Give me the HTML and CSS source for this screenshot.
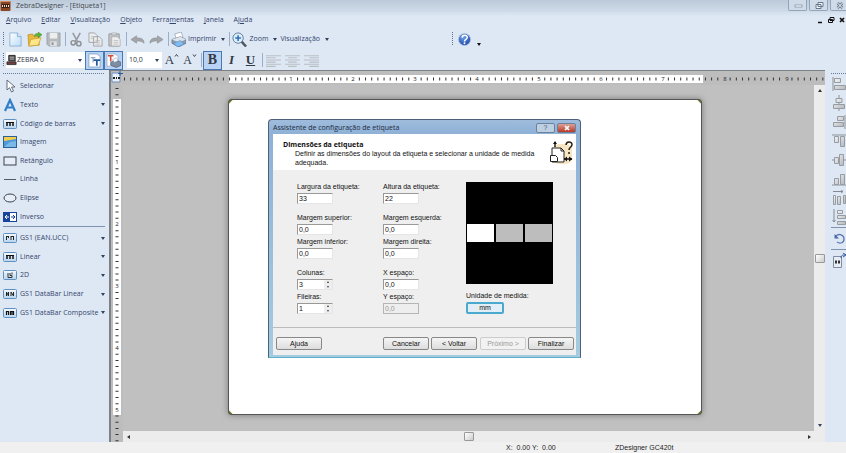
FILE: index.html
```html
<!DOCTYPE html>
<html lang="pt">
<head>
<meta charset="utf-8">
<title>ZebraDesigner - [Etiqueta1]</title>
<link rel="stylesheet" href="styles.css">
</head>
<body>
<svg class="defs" aria-hidden="true">
  <defs>
    <linearGradient id="steel" x1="0" y1="0" x2="1" y2="1"><stop offset="0" stop-color="#f4f4f4"/><stop offset="1" stop-color="#b4b8bc"/></linearGradient>
    <linearGradient id="paper" x1="0" y1="0" x2="1" y2="1"><stop offset="0" stop-color="#fff"/><stop offset="1" stop-color="#b9dcf7"/></linearGradient>
    <radialGradient id="ball" cx=".4" cy=".3" r=".8"><stop offset="0" stop-color="#6fa0ec"/><stop offset="1" stop-color="#163f9e"/></radialGradient>
    <linearGradient id="frame" x1="0" y1="0" x2="0" y2="1"><stop offset="0" stop-color="#f6fafd"/><stop offset="1" stop-color="#b5d3ee"/></linearGradient>
  </defs>
</svg>

<header class="titlebar">
  <svg class="app-icon" viewBox="0 0 10 10"><rect width="10" height="10" rx="1" fill="#8a4524"/><rect x="1" y="3" width="8" height="4" fill="#3b1f14"/><path d="M2 4v2M4 4v2M6 4v2M8 4v2" stroke="#f3d9c2"/><path d="M0 .5h10" stroke="#d78b5c"/></svg>
  <h1>ZebraDesigner - [Etiqueta1]</h1>
  <div class="window-controls">
    <button aria-label="Minimizar"><svg viewBox="0 0 16 9"><rect x="5" y="4" width="7" height="2" fill="#fff" stroke="#76869a" stroke-width=".7"/></svg></button>
    <button aria-label="Restaurar"><svg viewBox="0 0 16 9"><path d="M7 1.500h5v4h-5zM5 3.500h5v4h-5z" fill="#f4f8fc" stroke="#66778c" stroke-width="1"/></svg></button>
    <button aria-label="Fechar"><svg viewBox="0 0 16 9"><path d="M5.500 2l5 5m0-5l-5 5" stroke="#66778c" stroke-width="2.600"/><path d="M5.500 2l5 5m0-5l-5 5" stroke="#fff" stroke-width="1"/></svg></button>
  </div>
</header>

<nav class="menubar">
  <a href="#"><u>A</u>rquivo</a><a href="#"><u>E</u>ditar</a><a href="#"><u>V</u>isualização</a><a href="#"><u>O</u>bjeto</a><a href="#">Ferra<u>m</u>entas</a><a href="#"><u>J</u>anela</a><a href="#">Aj<u>u</u>da</a>
  <div class="child-controls">
    <button aria-label="Minimizar janela"><svg viewBox="0 0 8 8"><path d="M2 6.500h4" stroke="#111" stroke-width="1.500"/></svg></button>
    <button aria-label="Restaurar janela"><svg viewBox="0 0 8 8"><path d="M3 1.500h4v3H3zM1.500 3.500h4v3h-4z" fill="#dee8f5" stroke="#111"/></svg></button>
    <button aria-label="Fechar janela"><svg viewBox="0 0 8 8"><path d="M2 2l4 4m0-4L2 6" stroke="#111" stroke-width="1.700"/></svg></button>
  </div>
</nav>

<div class="toolbar">
  <span class="grip"></span>
  <button class="tool" aria-label="Novo"><svg viewBox="0 0 16 16"><path d="M2 1h8l4 4v10H2z" fill="url(#paper)" stroke="#7da7cf" stroke-width=".8"/><path d="M10 1v4h4" fill="#cfe6fa" stroke="#7da7cf" stroke-width=".8"/></svg></button>
  <button class="tool" aria-label="Abrir"><svg viewBox="0 0 16 16"><path d="M1 3l5-1 1 2 6 1v9l-11 1z" fill="#e7b93c" stroke="#b98718" stroke-width=".7"/><path d="M4 8l11-2-3 8-10 1z" fill="#fde58a" stroke="#c99b25" stroke-width=".7"/><path d="M8 5c0-3 2-4 4-3V0l4 3-4 3V4c-2-.5-3 0-4 1z" fill="#5db434" stroke="#37861c" stroke-width=".5"/></svg></button>
  <button class="tool" aria-label="Salvar"><svg viewBox="0 0 16 16"><path d="M1 1h14v14H3l-2-2z" fill="#b6babd" stroke="#94999d" stroke-width=".8"/><path d="M4 1h8v6H4z" fill="#eceeef"/><path d="M4.500 10h7v5h-7z" fill="#dfe2e4"/><path d="M6 11h2v3H6z" fill="#8d9296"/></svg></button>
  <span class="divider"></span>
  <button class="tool" aria-label="Recortar"><svg viewBox="0 0 16 16"><path d="M4 1l5 9M12 1L7 10" stroke="#969a9e" stroke-width="1.700" fill="none"/><circle cx="4.500" cy="11.500" r="2.300" fill="none" stroke="#8b8f94" stroke-width="1.500"/><circle cx="10.500" cy="12.500" r="2.300" fill="none" stroke="#8b8f94" stroke-width="1.500"/></svg></button>
  <button class="tool" aria-label="Copiar"><svg viewBox="0 0 16 16"><path d="M1 1h6l3 3v7H1zM6 5h6l3 3v7H6z" fill="#eee" stroke="#a0a3a6"/><path d="M8 9h5M8 11h5M8 13h5M3 5h3M3 7h3" stroke="#b5b7b9" stroke-width=".8"/></svg></button>
  <button class="tool" aria-label="Colar"><svg viewBox="0 0 16 16"><path d="M2 2h11v13H2z" fill="#c4c5c6" stroke="#999c9f"/><path d="M5 1h5v2H5z" fill="#eee" stroke="#999c9f" stroke-width=".7"/><path d="M5 5h6l3 3v7H5z" fill="#efefef" stroke="#aaa" stroke-width=".8"/><path d="M7 9h5M7 11h5M7 13h5" stroke="#b5b7b9" stroke-width=".8"/></svg></button>
  <span class="divider"></span>
  <button class="tool" aria-label="Desfazer"><svg viewBox="0 0 16 16"><path d="M1 8l6-4v2.500c5-.5 8 1 8 5.500-2-2-4-2.500-8-2.300V12z" fill="#a2a6aa" stroke="#878b90" stroke-width=".6"/></svg></button>
  <button class="tool" aria-label="Refazer"><svg viewBox="0 0 16 16"><path d="M15 8L9 4v2.500c-5-.5-8 1-8 5.500 2-2 4-2.500 8-2.300V12z" fill="#a2a6aa" stroke="#878b90" stroke-width=".6"/></svg></button>
  <span class="divider"></span>
  <button class="tool labelled"><svg viewBox="0 0 16 16"><path d="M4 2l7-2 2 7-7 2z" fill="#fff" stroke="#8898aa" stroke-width=".7"/><path d="M1 8l9-3 6 3v4l-8 4-7-4z" fill="#8e9db0" stroke="#59687b" stroke-width=".7"/><path d="M1 8l7 3 8-3-6-3z" fill="#dce3ea"/><path d="M3 12l7-3 4 4-7 3z" fill="#7fbcf2" stroke="#4e7fae" stroke-width=".5"/></svg>Imprimir<i class="caret"></i></button>
  <span class="divider"></span>
  <button class="tool labelled"><svg viewBox="0 0 16 16"><path d="M10 10l5 5.500" stroke="#50565f" stroke-width="2.600"/><circle cx="6.500" cy="6.500" r="5.500" fill="#dceefc" stroke="#5e7896"/><path d="M6.500 3.500v6M3.500 6.500h6" stroke="#2c6eb5" stroke-width="1.600"/></svg>Zoom<i class="caret"></i></button>
  <button class="tool labelled">Visualização<i class="caret"></i></button>
  <div class="help-group">
    <span class="grip"></span>
    <button class="tool" aria-label="Ajuda"><svg viewBox="0 0 16 16"><circle cx="8" cy="8" r="6.500" fill="url(#ball)" stroke="#b7c7e2"/><path d="M5.500 6c0-3.300 5.500-3.300 5.500-.3C11 8 8 7.500 8 10" fill="none" stroke="#fff" stroke-width="1.600"/><circle cx="8" cy="12" r="1" fill="#fff"/></svg></button>
    <button class="overflow" aria-label="Mais botões"><i class="caret"></i></button>
  </div>
</div>

<div class="toolbar format">
  <span class="grip"></span>
  <div class="combo font-combo">
    <svg viewBox="0 0 12 12"><path d="M3 1h7v6H3z" fill="#555" stroke="#222"/><path d="M4 3h5M4 5h5" stroke="#ddd" stroke-width=".7"/><path d="M1 8h10v3H1z" fill="#704040" stroke="#222" stroke-width=".8"/></svg>
    <select aria-label="Fonte"><option>ZEBRA 0</option></select><i class="caret"></i>
  </div>
  <button class="toggle" aria-label="Fontes TrueType"><svg viewBox="0 0 16 16"><path d="M2 1h9l3 3v11H2z" fill="#fff" stroke="#8ba7c8"/><path d="M4 5h5M6.500 5v5" stroke="#93a9c3" stroke-width="1.300"/><path d="M7 7.500h7M10.500 7.500v6" stroke="#235a9e" stroke-width="1.900"/></svg></button>
  <button class="toggle" aria-label="Fontes da impressora"><svg viewBox="0 0 16 16"><path d="M1 1h9l3 3v10H1z" fill="#fff" stroke="#9db3ce"/><path d="M2 3h6M5 3v6" stroke="#d34c3c" stroke-width="1.700"/><path d="M5 10l5-3 6 3v3l-5 2.500L5 13z" fill="#7e8da1" stroke="#46566c" stroke-width=".7"/><path d="M7 7l4-2 2 3-4 2z" fill="#fff" stroke="#7d8ea4" stroke-width=".5"/></svg></button>
  <div class="combo size-combo"><select aria-label="Tamanho"><option>10,0</option></select><i class="caret"></i></div>
  <button class="letter resize" aria-label="Aumentar fonte">A<svg viewBox="0 0 5 14"><path d="M1 3.500l1.500-2 1.500 2" fill="none" stroke="#445"/></svg></button>
  <button class="letter resize shrink" aria-label="Diminuir fonte">A<svg viewBox="0 0 5 14"><path d="M1 1.500l1.500 2 1.500-2" fill="none" stroke="#445"/></svg></button>
  <span class="divider"></span>
  <button class="toggle letter bold">B</button>
  <button class="letter italic">I</button>
  <button class="letter underline">U</button>
  <span class="divider"></span>
  <button class="tool" aria-label="Alinhar à esquerda"><svg viewBox="0 0 14 14"><path d="M0 2.500h14M0 4.500h9M0 6.500h14M0 8.500h9M0 10.500h14M0 12.500h9" stroke="#b9bec5"/></svg></button>
  <button class="tool" aria-label="Centralizar"><svg viewBox="0 0 14 14"><path d="M0 2.500h14M3 4.500h8M0 6.500h14M3 8.500h8M0 10.500h14M3 12.500h8" stroke="#b9bec5"/></svg></button>
  <button class="tool" aria-label="Alinhar à direita"><svg viewBox="0 0 14 14"><path d="M0 2.500h14M5 4.500h9M0 6.500h14M5 8.500h9M0 10.500h14M5 12.500h9" stroke="#b9bec5"/></svg></button>
</div>

<main class="workspace">
  <aside class="palette">
    <div class="grip-line"></div>
    <ul class="basic">
      <li><button><svg viewBox="0 0 14 14"><path d="M4 1v10l2.500-2.300L8.500 13l2-1-2-4H12z" fill="#fff" stroke="#555f6d" stroke-width=".9"/></svg>Selecionar</button></li>
      <li><button><svg viewBox="0 0 14 14"><path d="M2 13L7 2l5 11M4 9.500h6" fill="none" stroke="#2f7fc9" stroke-width="2.200"/></svg>Texto<i class="caret"></i></button></li>
      <li><button><svg viewBox="0 0 14 14"><rect x=".5" y="2.500" width="13" height="9" rx="1" fill="url(#frame)" stroke="#5e90c0"/><path d="M4 5v4M7 5v4M10 5v4" stroke="#111" stroke-width="1.500"/><path d="M3 5.500h8" stroke="#111"/></svg>Código de barras<i class="caret"></i></button></li>
      <li><button><svg viewBox="0 0 14 14"><rect x=".5" y="1.500" width="13" height="11" fill="#4e9ad8" stroke="#285f96"/><path d="M1 2h12v2L7 5l-6 1z" fill="#f2cf4b"/><path d="M1 12l6-5 6-1v6z" fill="#7bb9e8"/></svg>Imagem</button></li>
      <li><button><svg viewBox="0 0 14 14"><rect x="1" y="3" width="12" height="8" fill="#e7eef7" stroke="#38404c"/></svg>Retângulo</button></li>
      <li><button><svg viewBox="0 0 14 14"><path d="M1 7.500h12" stroke="#525b68"/></svg>Linha</button></li>
      <li><button><svg viewBox="0 0 14 14"><ellipse cx="7" cy="7" rx="6" ry="4" fill="#e7eef7" stroke="#38404c"/></svg>Elipse</button></li>
      <li><button><svg viewBox="0 0 14 14"><rect x=".5" y="2.500" width="13" height="9" fill="#fff" stroke="#17449b"/><path d="M1 3h6v8H1z" fill="#17449b"/><path d="M2 7h4M4 5L2 7l2 2" stroke="#fff" fill="none"/><path d="M8 7h4M10 5l2 2-2 2" stroke="#17449b" fill="none"/></svg>Inverso</button></li>
    </ul>
    <ul class="codes">
      <li><button><svg viewBox="0 0 14 14"><rect x=".5" y="2.500" width="13" height="9" rx="1" fill="url(#frame)" stroke="#5e90c0"/><path d="M3.500 5v4M5.500 5v2M8 5v4M10.500 5v4M3 5.500h3M8 5.500h3" stroke="#222"/></svg>GS1 (EAN.UCC)<i class="caret"></i></button></li>
      <li><button><svg viewBox="0 0 14 14"><rect x=".5" y="2.500" width="13" height="9" rx="1" fill="url(#frame)" stroke="#5e90c0"/><path d="M4 5v4M7 5v4M10 5v4" stroke="#111" stroke-width="1.500"/><path d="M3 5.500h8" stroke="#111"/></svg>Linear<i class="caret"></i></button></li>
      <li><button><svg viewBox="0 0 14 14"><rect x=".5" y="2.500" width="13" height="9" rx="1" fill="url(#frame)" stroke="#5e90c0"/><path d="M5 5v4.500h4V7.500H7V5M9 4.500v2" stroke="#333" fill="none"/></svg>2D<i class="caret"></i></button></li>
      <li><button><svg viewBox="0 0 14 14"><rect x=".5" y="2.500" width="13" height="9" rx="1" fill="url(#frame)" stroke="#5e90c0"/><path d="M3.500 9V5l2 4V5M8 9V5l2.500 4V5" stroke="#222" fill="none"/></svg>GS1 DataBar Linear<i class="caret"></i></button></li>
      <li><button><svg viewBox="0 0 14 14"><rect x=".5" y="2.500" width="13" height="9" rx="1" fill="url(#frame)" stroke="#5e90c0"/><path d="M3.500 9V5.500h2V9M7.500 9V5.500h3V9M9 5v4" stroke="#111" fill="none" stroke-width="1.200"/></svg>GS1 DataBar Composite<i class="caret"></i></button></li>
    </ul>
  </aside>

  <section class="editor">
    <div class="corner"><svg viewBox="0 0 12 12"><path d="M1 2h8v9H1z" fill="#e9eff8" stroke="#6e8fbb"/><path d="M2 7h2M5 7h1M7 7h2" stroke="#222" stroke-width="2"/><path d="M9 0v5M7 2.500h5" stroke="#2d569b"/></svg></div>
    <svg class="ruler-h">
      <rect x="106" y="4" width="474" height="8" fill="#fff"/>
      <path d="M1 8h710" stroke="#333" stroke-width="3" stroke-dasharray="1 5.180"/>
      <g fill="#fff"><path d="M165 4h6v8h-6zM227 4h6v8h-6zM289 4h6v8h-6zM351 4h6v8h-6zM413 4h6v8h-6zM475 4h6v8h-6zM537 4h6v8h-6z"/></g>
      <g fill="#bdbdbd"><path d="M599 4h6v8h-6zM661 4h6v8h-6z"/></g>
      <g class="ruler-text"><text x="168" y="10">1</text><text x="230" y="10">2</text><text x="292" y="10">3</text><text x="354" y="10">4</text><text x="416" y="10">5</text><text x="478" y="10">6</text><text x="540" y="10">7</text><text x="602" y="10">8</text><text x="664" y="10">9</text></g>
    </svg>
    <svg class="ruler-v">
      <rect x="2" y="14" width="8" height="316" fill="#fff"/>
      <path d="M6 3v400" stroke="#333" stroke-width="3" stroke-dasharray="1 5.180"/>
      <path d="M3 73h6v7H3zM3 135h6v7H3zM3 197h6v7H3zM3 259h6v7H3zM3 321h6v7H3z" fill="#fff"/>
      <g class="ruler-text"><text x="6" y="79">1</text><text x="6" y="141">2</text><text x="6" y="203">3</text><text x="6" y="265">4</text><text x="6" y="327">5</text></g>
    </svg>
    <div class="canvas">
      <div class="label-page"></div>
    </div>
    <div class="scroll-v"><i class="caret up"></i><i class="thumb"></i><i class="caret"></i></div>
    <div class="scroll-h"><i class="caret left"></i><i class="thumb"></i><i class="caret right"></i></div>

    <form class="dialog" role="dialog" aria-labelledby="dialog-title">
      <div class="dialog-title">
        <h2 id="dialog-title">Assistente de configuração de etiqueta</h2>
        <button type="button" class="dialog-help" aria-label="Ajuda do assistente">?</button>
        <button type="button" class="dialog-close" aria-label="Fechar assistente"><svg viewBox="0 0 8 8"><path d="M2 2l4 4m0-4L2 6" stroke="#fff" stroke-width="1.700"/></svg></button>
      </div>
      <div class="dialog-head">
        <div>
          <h3>Dimensões da etiqueta</h3>
          <p>Definir as dimensões do layout da etiqueta e selecionar a unidade de medida adequada.</p>
        </div>
        <svg viewBox="0 0 24 26"><rect x="4" y="4" width="19" height="20" rx="6" fill="#f7e6c4"/><path d="M3 8h9l3 3v11H3z" fill="#fff" stroke="#222"/><path d="M12 8v3h3" fill="none" stroke="#222"/><path d="M1.500 15.500h5l2 2v4h-7z" fill="#fff" stroke="#222"/><path d="M6 2v5M15 19h8" stroke="#111" stroke-width="1.400"/><path d="M4 4l2-3 2 3zM18 16.500v5L15 19zM20 16.500v5l3.500-2.500z" fill="#111"/><path d="M17 5c0-4 6-4 6-.5 0 3-3 2.500-3 5.500M20 12v2" fill="none" stroke="#2b210f" stroke-width="1.500"/></svg>
      </div>
      <div class="dialog-body">
        <div class="fields">
          <div class="field"><label for="w">Largura da etiqueta:</label><input id="w" value="33"></div>
          <div class="field"><label for="h">Altura da etiqueta:</label><input id="h" value="22"></div>
          <div class="field spaced"><label for="mt">Margem superior:</label><input id="mt" value="0,0"></div>
          <div class="field spaced"><label for="ml">Margem esquerda:</label><input id="ml" value="0,0"></div>
          <div class="field"><label for="mb">Margem inferior:</label><input id="mb" value="0,0"></div>
          <div class="field"><label for="mr">Margem direita:</label><input id="mr" value="0,0"></div>
          <div class="field spaced spin"><label for="cols">Colunas:</label><input id="cols" value="3"><span class="spinner"><i class="caret up"></i><i class="caret"></i></span></div>
          <div class="field spaced"><label for="gx">X espaço:</label><input id="gx" value="0,0"></div>
          <div class="field spin"><label for="rows">Fileiras:</label><input id="rows" value="1"><span class="spinner"><i class="caret up"></i><i class="caret"></i></span></div>
          <div class="field"><label for="gy">Y espaço:</label><input id="gy" value="0,0" disabled></div>
        </div>
        <div class="preview-column">
          <div class="preview"><i class="active"></i><i></i><i></i></div>
          <label for="unit">Unidade de medida:</label>
          <button type="button" id="unit">mm</button>
        </div>
      </div>
      <div class="dialog-actions">
        <button type="button" class="help">Ajuda</button>
        <button type="button">Cancelar</button>
        <button type="button" class="joined">&lt; Voltar</button>
        <button type="button" disabled>Próximo &gt;</button>
        <button type="button" class="joined">Finalizar</button>
      </div>
    </form>
  </section>

  <aside class="align-bar">
    <div class="grip-line"></div>
    <button aria-label="Alinhar à esquerda"><svg viewBox="0 0 14 16"><path d="M1 1v14" stroke="#8b9199"/><path d="M2.500 2.500h6v4h-6zM2.500 9.500h11v4h-11z" fill="url(#steel)" stroke="#979ca2"/></svg></button>
    <button aria-label="Centralizar na horizontal"><svg viewBox="0 0 14 16"><path d="M7 0v16" stroke="#8b9199"/><path d="M4 3.500h6v4H4zM1.500 9.500h11v4h-11z" fill="url(#steel)" stroke="#979ca2"/></svg></button>
    <button aria-label="Alinhar à direita"><svg viewBox="0 0 14 16"><path d="M13 1v14" stroke="#8b9199"/><path d="M5.500 2.500h6v4h-6zM1.500 8.500h10v4h-10z" fill="url(#steel)" stroke="#979ca2"/></svg></button>
    <button aria-label="Alinhar ao topo"><svg viewBox="0 0 14 16"><path d="M0 2h14" stroke="#8b9199"/><path d="M2.500 3.500h4v6h-4zM8.500 3.500h4v10h-4z" fill="url(#steel)" stroke="#979ca2"/></svg></button>
    <button aria-label="Centralizar na vertical"><svg viewBox="0 0 14 16"><path d="M0 8h14" stroke="#8b9199"/><path d="M2.500 5.500h4v6h-4zM7.500 2.500h4v11h-4z" fill="url(#steel)" stroke="#979ca2"/></svg></button>
    <button aria-label="Alinhar à base"><svg viewBox="0 0 14 16"><path d="M0 14h14" stroke="#8b9199"/><path d="M2.500 7.500h4v6h-4zM8.500 3.500h4v10h-4z" fill="url(#steel)" stroke="#979ca2"/></svg></button>
    <button aria-label="Distribuir na horizontal"><svg viewBox="0 0 14 16"><path d="M1 1.500h10M9 0l2 1.500L9 3" stroke="#848b94" fill="none"/><path d="M1.500 5.500h2v9h-2zM5.500 6.500h3v8h-3zM11.500 5.500h2v8h-2z" fill="url(#steel)" stroke="#979ca2"/></svg></button>
    <button aria-label="Distribuir na vertical"><svg viewBox="0 0 14 16"><path d="M2 0v13M.5 11L2 13l1.500-2" stroke="#848b94" fill="none"/><path d="M5.500 1.500h5v3h-5zM5.500 6.500h8v3h-8zM5.500 12.500h8v3h-8z" fill="url(#steel)" stroke="#979ca2"/></svg></button>
    <hr>
    <button aria-label="Girar"><svg viewBox="0 0 14 16"><path d="M4 5c3-3 8-1 8 3 0 4-4 5-7 3" fill="none" stroke="#5c78b2" stroke-width="1.300"/><path d="M2.500 3v4.500H7z" fill="#4766a8"/></svg></button>
    <hr>
    <button aria-label="Propriedades"><svg viewBox="0 0 14 16"><path d="M1.500 3.500h8v11h-8z" fill="#e8edf4" stroke="#7e8da3"/><path d="M3 9h6" stroke="#333" stroke-width="3" stroke-dasharray="2 1"/><path d="M9 5c0-3 2-3 4-3M11 0l3 2-3 2" fill="none" stroke="#34579e"/></svg></button>
  </aside>
</main>

<footer class="statusbar">
  <span class="coords">X:&nbsp; 0.00 Y:&nbsp; 0.00</span>
  <span>ZDesigner GC420t</span>
</footer>
</body>
</html>
```
FILE: styles.css
```css
* { box-sizing: border-box; }

body {
  margin: 0;
  height: 100vh;
  display: flex;
  flex-direction: column;
  overflow: hidden;
  background: #dee8f5;
  color: #33456b;
  font: 7px/10px "Open Sans", sans-serif;
}

h1, h2, h3, p, ul { margin: 0; padding: 0; font: inherit; }
ul { list-style: none; }
a { color: inherit; text-decoration: none; }
button, input, select { font: inherit; color: inherit; margin: 0; padding: 0; border: 0; background: none; border-radius: 0; }
button { display: flex; align-items: center; justify-content: center; }
svg { display: block; flex: none; }
.defs { position: absolute; width: 0; height: 0; }

.caret {
  flex: none;
  width: 0;
  height: 0;
  border: 2px solid transparent;
  border-top: 3px solid #33415c;
  border-bottom: 0;
}
.caret.up { border-top: 0; border-bottom: 3px solid #333; }
.caret.left { border: 2px solid transparent; border-right: 3px solid #333; border-left: 0; }
.caret.right { border: 2px solid transparent; border-left: 3px solid #333; border-right: 0; }

/* Window frame */
.titlebar {
  flex: none;
  height: 12px;
  display: flex;
  align-items: center;
  gap: 5px;
  background: linear-gradient(#bccad9, #d0dce9);
}
.app-icon { width: 11px; height: 10px; }
.titlebar h1 { flex: 1; color: #40474f; }
.window-controls { display: flex; gap: 2px; align-self: flex-start; margin-right: -3px; }
.window-controls button {
  width: 19px;
  height: 11px;
  border: 1px solid #94a5b8;
  border-top: 0;
  border-radius: 0 0 2px 2px;
  background: #cfdbe8;
}
.window-controls svg { width: 16px; height: 9px; }

.menubar {
  flex: none;
  height: 16px;
  display: flex;
  align-items: center;
  gap: 10px;
  padding-left: 6px;
  background: linear-gradient(#d3dfec, #dee8f5 4px);
}
.child-controls { display: flex; gap: 3px; margin-left: auto; }
.child-controls svg { width: 8px; height: 8px; }

/* Toolbars */
.toolbar {
  flex: none;
  height: 22px;
  display: flex;
  align-items: center;
  padding-left: 3px;
}
.toolbar.format { height: 20px; }
.grip {
  width: 1px;
  height: 14px;
  margin-right: 2px;
  background: repeating-linear-gradient(#5d7090 0 1px, transparent 1px 2px);
}
.divider { width: 1px; height: 14px; margin: 0 1px 0 2px; background: #9aaec9; }
.tool { width: 19px; height: 20px; }
.tool svg { width: 15px; height: 15px; }
.tool.labelled { width: auto; padding: 0 2px 0 1px; gap: 2px; }
.tool .caret { margin-left: 3px; }
.help-group { display: flex; align-items: center; margin-left: 121px; }
.overflow { height: 20px; align-items: flex-end; padding: 0 3px 3px; }
.overflow .caret { border-top-color: #111; }

.combo { display: flex; align-items: center; height: 16px; background: #fff; }
.combo select { flex: 1; min-width: 0; height: 14px; appearance: none; color: #2c3442; }
.combo .caret { margin: 0 3px; }
.combo svg { width: 11px; height: 12px; }
.font-combo { width: 79px; }
.size-combo { width: 35px; margin: 0 1px 0 4px; padding-left: 2px; }
.toggle {
  width: 19px;
  height: 19px;
  border: 1px solid #4878b0;
  background: #b8d3f3;
}
.toggle svg { width: 15px; height: 15px; }
.letter { width: 19px; height: 18px; color: #333a45; font: 13px/16px "Liberation Serif", serif; }
.letter.resize { width: 18px; }
.letter.resize svg { width: 5px; height: 16px; }
.letter.shrink { font-size: 12px; }
.letter.bold { height: 19px; font-weight: bold; font-size: 14px; }
.letter.italic { font-weight: bold; font-style: italic; }
.letter.underline { font-weight: bold; text-decoration: underline; }

/* Workspace */
.workspace { flex: 1; min-height: 0; display: flex; }

.palette { flex: none; width: 109px; padding: 3px 4px 0 3px; }
.grip-line { height: 1px; background: repeating-linear-gradient(90deg, #66799a 0 1px, transparent 1px 2px); }
.palette ul { display: grid; grid-auto-rows: 1fr; }
.basic { height: 153px; padding-top: 3px; border-bottom: 1px solid #7f93b0; }
.codes { height: 95px; padding-top: 2px; }
.palette li { display: flex; }
.palette button { flex: 1; justify-content: flex-start; gap: 3px; white-space: nowrap; }
.palette svg { width: 14px; height: 14px; }
.palette .caret { margin-left: auto; }

.editor {
  position: relative;
  flex: 1;
  min-width: 0;
  display: grid;
  grid-template: 14px 1fr 11px / 12px 1fr 11px;
  border-left: 2px solid #7c8087;
  border-top: 1px solid #7c8087;
  background: #bdbdbd;
}
.corner svg { width: 12px; height: 12px; }
.ruler-h { grid-column: 2 / 4; width: 100%; height: 14px; }
.ruler-v { grid-row: 2 / 4; grid-column: 1; width: 12px; height: 100%; }
.ruler-text { font-size: 6px; text-anchor: middle; fill: #222; }
.canvas { position: relative; overflow: hidden; background: #c0c0c0; }
.label-page {
  position: absolute;
  left: 105px;
  top: 14px;
  width: 474px;
  height: 316px;
  border: 1px solid #555;
  border-radius: 3px;
  background:
    linear-gradient(135deg, #6b7020 2px, transparent 3px),
    linear-gradient(225deg, #6b7020 2px, transparent 3px),
    linear-gradient(45deg, #6b7020 2px, transparent 3px),
    linear-gradient(315deg, #6b7020 2px, #fff 3px);
  box-shadow: 0 0 6px #777;
}
.scroll-v, .scroll-h { display: flex; align-items: center; justify-content: space-between; background: #ececec; }
.scroll-v { flex-direction: column; padding: 4px 0; }
.scroll-h { grid-row: 3; grid-column: 2 / 4; padding: 0 14px 0 4px; }
.thumb { width: 10px; height: 9px; border: 1px solid #999; border-radius: 1px; background: linear-gradient(135deg, #fff, #ccc); }

.align-bar { flex: none; width: 18px; margin-left: 3px; padding: 3px 0 0 3px; }
.align-bar button { width: 15px; height: 19px; }
.align-bar svg { width: 14px; height: 16px; }
.align-bar hr { margin: 1px 0; border: 0; border-top: 1px solid #7f93b0; }

/* Wizard */
.dialog {
  position: absolute;
  left: 157px;
  top: 48px;
  width: 313px;
  padding: 0 4px 2px;
  border: 1px solid #4c6078;
  border-bottom-color: #5fb0c8;
  border-radius: 4px 4px 0 0;
  background: linear-gradient(#9fbcdc, #8eb1d6 14px, #a5cbe0);
  color: #111;
  font: 7px/10px "Liberation Sans", sans-serif;
}
.dialog-title { display: flex; gap: 2px; height: 14px; }
.dialog-title h2 { flex: 1; color: #1d2a3c; font: 7px/15px "Open Sans", sans-serif; }
.dialog-title button { width: 19px; height: 10px; margin-top: 3px; border: 1px solid #6d8198; border-radius: 2px; }
.dialog-help { background: #bccfe3; color: #506075; }
.dialog-close { background: linear-gradient(#dda095, #b83828); }
.dialog-close svg { width: 8px; height: 8px; }

.dialog-head { display: flex; justify-content: space-between; height: 36px; padding: 6px 3px 0 10px; background: #fff; }
.dialog-head h3 { font: bold 7px/9px "Open Sans", sans-serif; }
.dialog-head p { width: 260px; padding-left: 12px; line-height: 9px; }
.dialog-head svg { width: 24px; height: 26px; }

.dialog-body { display: flex; height: 157px; padding: 12px 23px 0 24px; background: #efefef; }
.fields { flex: 1; display: grid; grid-template-columns: 86px 1fr; row-gap: 2px; align-content: start; }
.field { position: relative; height: 22px; }
.field.spaced { height: 29px; padding-top: 7px; }
.field label, .preview-column label { display: block; height: 11px; white-space: nowrap; }
.field input {
  display: block;
  width: 36px;
  height: 11px;
  padding-left: 1px;
  border: 1px solid #999;
  border-right-color: #e5e5e5;
  border-bottom-color: #e5e5e5;
  background: #fff;
}
.field input:disabled { border-color: #b5b5b5; background: #eee; color: #999; }
.spinner { position: absolute; left: 27px; bottom: 1px; width: 8px; height: 9px; display: grid; place-items: center; background: #eee; }
.spinner .caret { border-width: 2px 1px 0; }
.spinner .caret.up { border-width: 0 1px 2px; }

.preview-column { width: 87px; }
.preview {
  display: flex;
  gap: 2px;
  height: 102px;
  margin-bottom: 7px;
  padding: 42px 1px 42px;
  background: #000;
}
.preview i { flex: 1; background: #bdbdbd; }
.preview .active { background: #fff; }
.dialog button[id="unit"] { width: 38px; height: 12px; border: 2px solid #4aa9cf; border-radius: 2px; background: #e2eef5; }

.dialog-actions { display: flex; padding: 9px 2px 5px 3px; border-top: 1px solid #bbb; background: #efefef; }
.dialog-actions button {
  width: 46px;
  height: 13px;
  margin-left: 3px;
  border: 1px solid #888;
  border-radius: 2px;
  background: linear-gradient(#f5f5f5, #ddd);
}
.dialog-actions .help { margin: 0 auto 0 0; }
.dialog-actions .joined { margin-left: 2px; }
.dialog-actions button:disabled { border-color: #ccc; background: #f2f2f2; color: #999; }

.statusbar {
  flex: none;
  height: 11px;
  display: grid;
  grid-template-columns: 506px 109px 1fr;
  background: #f0f0f0;
  color: #222;
  font: 7px/11px "Liberation Sans", sans-serif;
}
.coords { grid-column: 2; }
```
